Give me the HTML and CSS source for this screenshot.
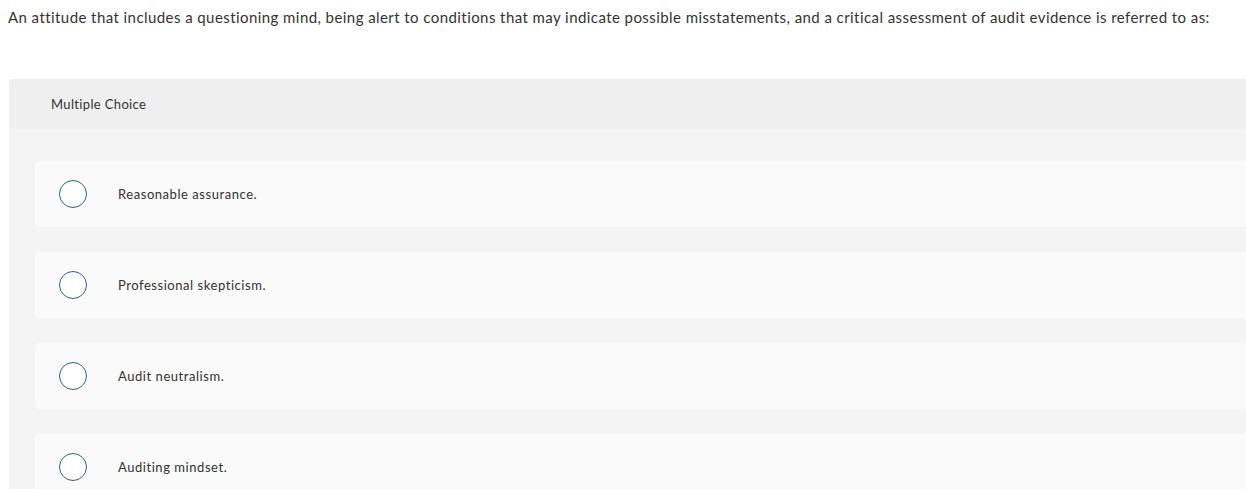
FILE: index.html
```html
<!DOCTYPE html>
<html>
<head>
<meta charset="utf-8">
<link rel="stylesheet" href="styles.css">
</head>
<body>
<p class="question">An attitude that includes a questioning mind, being alert to conditions that may indicate possible misstatements, and a critical assessment of audit evidence is referred to as:</p>
<div class="panel">
  <div class="panel-head">Multiple Choice</div>
  <div class="options">
    <div class="option"><span class="radio"></span><span class="label">Reasonable assurance.</span></div>
    <div class="option"><span class="radio"></span><span class="label">Professional skepticism.</span></div>
    <div class="option"><span class="radio"></span><span class="label">Audit neutralism.</span></div>
    <div class="option"><span class="radio"></span><span class="label">Auditing mindset.</span></div>
  </div>
</div>
</body>
</html>
```
FILE: styles.css
```css
html, body {
  margin: 0;
  padding: 0;
  background: #ffffff;
  overflow: hidden;
}
body {
  font-family: "Lato", "Open Sans", sans-serif;
  color: #333333;
  width: 1246px;
  height: 489px;
}
.question {
  margin: 0;
  padding: 7px 0 0 8px;
  font-size: 15px;
  line-height: 20px;
  letter-spacing: 0.43px;
  color: #333;
  white-space: nowrap;
}
.panel {
  margin: 52px 0 0 9px;
  width: 1260px;
  background: #f4f4f4;
  border-radius: 4px 0 0 0;
}
.panel-head {
  height: 50px;
  background: #efefef;
  border-radius: 4px 0 0 0;
  display: flex;
  align-items: center;
  padding-left: 42px;
  font-size: 13px;
  letter-spacing: 0.35px;
  color: #333;
}
.options {
  padding: 32px 0 0 26px;
  display: flex;
  flex-direction: column;
  gap: 25px;
}
.option {
  height: 66px;
  background: #fafafa;
  border-radius: 4px 0 0 4px;
  display: flex;
  align-items: center;
}
.radio {
  box-sizing: border-box;
  width: 28px;
  height: 28px;
  border: 1.5px solid #2f5f8e;
  border-radius: 50%;
  background: #fff;
  margin-left: 24px;
}
.label {
  margin-left: 31px;
  font-size: 13px;
  letter-spacing: 0.55px;
  color: #333;
}
```
